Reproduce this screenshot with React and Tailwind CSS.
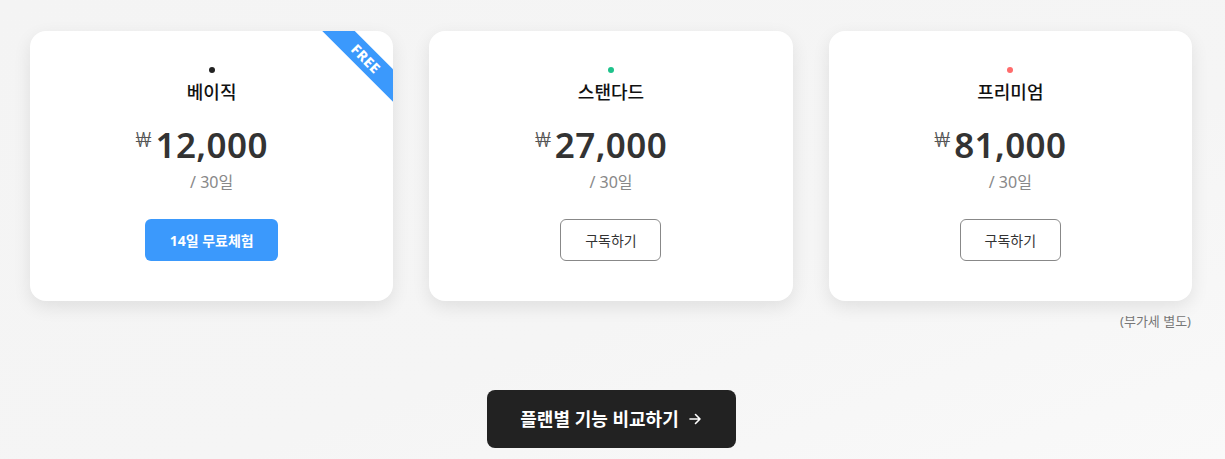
import React from "react";

const font = { fontFamily: '"Noto Sans", "Noto Sans CJK KR", sans-serif' };
const won = { fontFamily: 'Roboto, "DejaVu Sans", sans-serif' };

function Card({ dot, title, price, primary, free }) {
  return (
    <div className="relative flex h-[270px] flex-col items-center overflow-hidden rounded-[16px] bg-white shadow-[0_6px_18px_rgba(0,0,0,0.09)]">
      {free && (
        <div className="absolute right-[-33px] top-[16px] flex h-[23px] w-[120px] rotate-45 items-center justify-center bg-[#3b99fc] text-[14px] font-extrabold tracking-[0.5px] text-white">
          FREE
        </div>
      )}
      <div className={`mt-[36px] h-[6px] w-[6px] rounded-full ${dot}`} />
      <div className="mt-[6px] text-[18px] font-medium leading-[26px] text-[#111]">{title}</div>
      <div className="relative mt-[16px]">
        <span className="absolute right-full top-[8px] mr-[4px] text-[21px] font-light leading-[22px] text-[#555]" style={won}>₩</span>
        <span className="text-[35px] font-semibold leading-[48px] tracking-[0.4px] text-[#333]">{price}</span>
      </div>
      <div className="mt-[1px] text-[16px] leading-[24px] text-[#888]">/ 30일</div>
      {primary ? (
        <div className="mt-[25px] flex h-[42px] w-[133px] items-center justify-center rounded-[6px] bg-[#3b99fc] text-[14px] font-bold text-white">
          14일 무료체험
        </div>
      ) : (
        <div className="mt-[25px] flex h-[42px] w-[101px] items-center justify-center rounded-[6px] border border-[#888] text-[14px] text-[#333]">
          구독하기
        </div>
      )}
    </div>
  );
}

export default function App() {
  return (
    <div
      className="min-h-[459px] w-full bg-[linear-gradient(160deg,#f4f4f4_0%,#f5f5f5_60%,#f9f9f9_100%)] pl-[30px] pr-[33px] pt-[31px]"
      style={font}
    >
      <div className="grid grid-cols-3 gap-[36px]">
        <Card dot="bg-[#222]" title="베이직" price="12,000" primary free />
        <Card dot="bg-[#1ec28b]" title="스탠다드" price="27,000" />
        <Card dot="bg-[#ff6b6b]" title="프리미엄" price="81,000" />
      </div>
      <div className="mr-[1px] mt-[10px] text-right text-[13px] leading-[20px] text-[#777]">(부가세 별도)</div>
      <div className="mt-[59px] flex justify-center">
        <div className="flex h-[58px] w-[249px] items-center justify-center rounded-[8px] bg-[#222] text-[18px] font-bold text-white">
          플랜별 기능 비교하기
          <svg className="ml-[9px]" width="14" height="14" viewBox="0 0 14 14" fill="none" stroke="white" strokeWidth="1.6" strokeLinecap="round" strokeLinejoin="round">
            <path d="M2 7h10M7.5 2.5 12 7l-4.5 4.5" />
          </svg>
        </div>
      </div>
    </div>
  );
}
